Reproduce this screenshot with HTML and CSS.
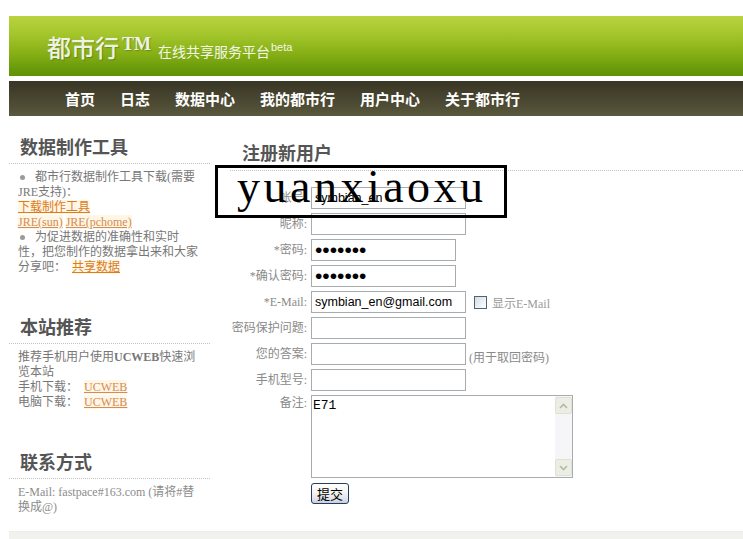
FILE: index.html
```html
<!DOCTYPE html>
<html lang="zh-CN">
<head>
<meta charset="utf-8">
<title>都市行 - 注册新用户</title>
<link rel="stylesheet" href="styles.css">
</head>
<body>
<div class="page">
  <header class="masthead">
    <h1 class="brand">都市行<sup class="tm">TM</sup></h1>
    <span class="tagline">在线共享服务平台<sup class="beta">beta</sup></span>
  </header>
  <nav class="mainnav">
    <a href="#">首页</a>
    <a href="#">日志</a>
    <a href="#">数据中心</a>
    <a href="#">我的都市行</a>
    <a href="#">用户中心</a>
    <a href="#">关于都市行</a>
  </nav>
  <div class="columns">
    <aside class="sidebar">
      <section class="side-box">
        <h2 class="side-title">数据制作工具</h2>
        <p class="side-body"><span class="dot"></span>都市行数据制作工具下载(需要<br>JRE支持)：<br><a class="link" href="#">下载制作工具</a><br><a class="link soft" href="#">JRE(sun)</a> <a class="link soft" href="#">JRE(pchome)</a><br><span class="dot"></span>为促进数据的准确性和实时<br>性，把您制作的数据拿出来和大家<br>分享吧：&nbsp;&nbsp;<a class="link" href="#">共享数据</a></p>
      </section>
      <section class="side-box">
        <h2 class="side-title">本站推荐</h2>
        <p class="side-body">推荐手机用户使用<b>UCWEB</b>快速浏<br>览本站<br>手机下载：&nbsp;&nbsp;<a class="link soft" href="#">UCWEB</a><br>电脑下载：&nbsp;&nbsp;<a class="link soft" href="#">UCWEB</a></p>
      </section>
      <section class="side-box">
        <h2 class="side-title">联系方式</h2>
        <p class="side-body contact">E-Mail: fastpace#163.com (请将#替<br>换成@)</p>
      </section>
    </aside>
    <main class="main">
      <h2 class="main-title">注册新用户</h2>
      <form class="reg-form">
        <div class="row"><label class="lbl">帐号:</label><input class="field" type="text" value="symbian_en"></div>
        <div class="row"><label class="lbl">昵称:</label><input class="field" type="text" value=""></div>
        <div class="row"><label class="lbl">*密码:</label><input class="field pw" type="password" value="1234567"></div>
        <div class="row"><label class="lbl">*确认密码:</label><input class="field pw" type="password" value="1234567"></div>
        <div class="row"><label class="lbl">*E-Mail:</label><input class="field" type="text" value="symbian_en@gmail.com"><input class="check" type="checkbox"><span class="check-text">显示E-Mail</span></div>
        <div class="row"><label class="lbl">密码保护问题:</label><input class="field" type="text" value=""></div>
        <div class="row"><label class="lbl">您的答案:</label><input class="field" type="text" value=""><span class="note">(用于取回密码)</span></div>
        <div class="row"><label class="lbl">手机型号:</label><input class="field" type="text" value=""></div>
        <div class="row top"><label class="lbl">备注:</label>
          <div class="memo">
            <textarea class="memo-text">E71</textarea>
            <div class="sbar">
              <span class="sbtn"><svg width="9" height="6" viewBox="0 0 9 6"><path d="M1 5 L4.5 1.5 L8 5" fill="none" stroke="#b4b8a8" stroke-width="1.6"/></svg></span>
              <span class="strack"></span>
              <span class="sbtn"><svg width="9" height="6" viewBox="0 0 9 6"><path d="M1 1 L4.5 4.5 L8 1" fill="none" stroke="#b4b8a8" stroke-width="1.6"/></svg></span>
            </div>
          </div>
        </div>
        <div class="row submit-row"><button class="submit" type="button">提交</button></div>
      </form>
    </main>
  </div>
  <footer class="footer"></footer>
  <div class="stamp">yuanxiaoxu</div>
</div>
</body>
</html>
```
FILE: styles.css
```css
html, body {
  margin: 0;
  padding: 0;
  background: #fff;
}
body {
  font: 12px/15px "Liberation Serif", "Noto Sans CJK SC", serif;
  color: #777;
  overflow: hidden;
}
.page {
  position: relative;
  margin: 16px 0 0 9px;
}

/* header */
.masthead {
  height: 60px;
  box-sizing: border-box;
  padding: 18px 0 0 38px;
  display: flex;
  align-items: baseline;
  background: linear-gradient(#b9d340 0%, #a4c62c 30%, #84ae14 65%, #66980a 90%, #5f9204 100%);
}
.brand {
  margin: 0;
  font: 500 24px/26px "Noto Sans CJK SC", sans-serif;
  color: #eef1e4;
  text-shadow: 1px 1px 1px rgba(50, 70, 0, 0.35);
}
.tm {
  font: bold 18px "Liberation Serif", serif;
  vertical-align: 7px;
  margin-left: 3px;
}
.tagline {
  margin-left: 7px;
  font: 14px "Noto Sans CJK SC", sans-serif;
  color: #f3f6e8;
}
.beta {
  font: 11px "Liberation Sans", sans-serif;
  vertical-align: 6px;
  margin-left: 1px;
}

/* navigation */
.mainnav {
  margin-top: 5px;
  height: 35px;
  padding-left: 56px;
  display: flex;
  align-items: center;
  gap: 25px;
  background: linear-gradient(#383624 0%, #45432e 40%, #504e36 75%, #5b593e 100%);
}
.mainnav a {
  color: #fff;
  text-decoration: none;
  font: bold 15px/35px "Noto Sans CJK SC", sans-serif;
}

/* columns */
.columns {
  display: flex;
}
.sidebar {
  width: 201px;
  flex: none;
  padding: 19px 0 16px;
}
.side-box + .side-box {
  margin-top: 40px;
}
.side-title, .main-title {
  margin: 0;
  padding: 0 0 6px 11px;
  font: bold 18px/22px "Noto Sans CJK SC", sans-serif;
  color: #555;
  border-bottom: 1px dotted #c0c0c0;
}
.side-body {
  margin: 0;
  padding: 6px 0 0 9px;
  line-height: 15px;
}
.side-body b {
  color: #777;
}
.contact {
  color: #8c8c8c;
}
.dot {
  display: inline-block;
  width: 5px;
  height: 5px;
  border-radius: 50%;
  background: #9a9a9a;
  margin: 0 10px 2px 2px;
  vertical-align: middle;
}
.link {
  color: #dc7d1c;
  background: #fff6e6;
  text-decoration: underline;
}
.link.soft {
  color: #d48c52;
}

/* main */
.main {
  flex: 1;
  margin-left: 20px;
}
.main-title {
  margin-top: 25px;
  padding-left: 12px;
  padding-bottom: 7px;
}
.reg-form {
  padding-top: 16px;
  display: flex;
  flex-direction: column;
  gap: 4px;
}
.row {
  display: flex;
  align-items: center;
}
.row.top {
  align-items: flex-start;
}
.lbl {
  width: 77px;
  margin-right: 4px;
  text-align: right;
  color: #8a8a8a;
  line-height: 15px;
}
.row.top .lbl {
  padding-top: 1px;
}
.field {
  width: 155px;
  height: 22px;
  box-sizing: border-box;
  margin: 0;
  padding: 0 3px;
  border: 1px solid #a7acb0;
  background: #fff;
  font: 12.5px "Liberation Sans", sans-serif;
  color: #000;
  outline: none;
}
.field.pw {
  width: 145px;
  font-size: 21px;
  letter-spacing: 0;
}
.check {
  appearance: none;
  -webkit-appearance: none;
  width: 13px;
  height: 13px;
  margin: 0 0 0 8px;
  border: 1px solid #4a6478;
  background: linear-gradient(135deg, #d6dce2, #ffffff);
  box-sizing: border-box;
}
.check-text {
  margin-left: 5px;
  color: #9a9a9a;
  position: relative;
  top: 2px;
}
.note {
  margin-left: 3px;
  align-self: flex-end;
  line-height: 14px;
  color: #8a8a8a;
}
.memo {
  width: 262px;
  height: 83px;
  box-sizing: border-box;
  border: 1px solid #a7acb0;
  display: flex;
}
.memo-text {
  flex: 1;
  margin: 0;
  border: 0;
  padding: 2px 1px;
  resize: none;
  outline: none;
  overflow: hidden;
  font: 13px/15px "Liberation Mono", monospace;
  color: #000;
}
.sbar {
  width: 17px;
  display: flex;
  flex-direction: column;
  background: #f6f6f8;
  padding: 1px 0;
}
.sbtn {
  height: 17px;
  box-sizing: border-box;
  border: 1px solid #dfe1d6;
  border-radius: 2px;
  background: #eceee4;
  display: flex;
  align-items: center;
  justify-content: center;
}
.strack {
  flex: 1;
}
.submit-row {
  padding-left: 81px;
  margin-top: 1px;
}
.submit {
  width: 38px;
  height: 21px;
  margin: 0;
  padding: 0;
  border: 1px solid #1f3e6a;
  border-radius: 3px;
  background: linear-gradient(#ffffff 0%, #f4f4f0 45%, #e0e2ea 80%, #c8cedc 100%);
  font: 13px/19px "Noto Sans CJK SC", sans-serif;
  color: #000;
}

/* footer */
.footer {
  height: 12px;
  background: #f1f1ed;
  border-top: 1px solid #ecece8;
}

/* overlay stamp */
.stamp {
  position: absolute;
  left: 206px;
  top: 149px;
  width: 292px;
  height: 53px;
  box-sizing: border-box;
  border: 3px solid #000;
  padding-left: 19px;
  font: 46px/37px "Liberation Serif", serif;
  letter-spacing: 3.5px;
  color: #000;
  white-space: nowrap;
}
```
